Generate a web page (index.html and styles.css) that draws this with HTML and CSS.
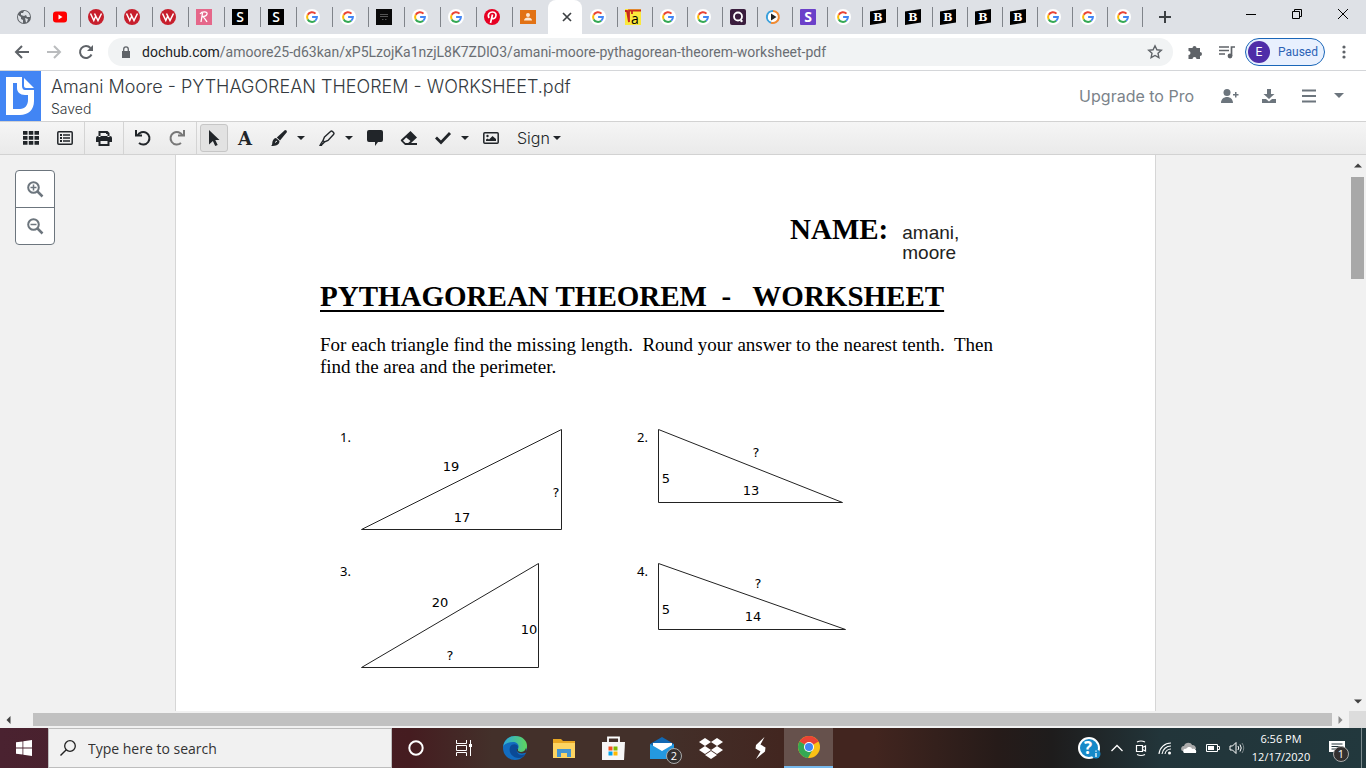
FILE: index.html
```
<!DOCTYPE html>
<html lang="en">
<head>
  <meta charset="utf-8">
  <title>Amani Moore - PYTHAGOREAN THEOREM - WORKSHEET.pdf</title>
  <link rel="stylesheet" href="styles.css">
</head>
<body>
  <!-- Shared icons -->
  <svg class="sprite" aria-hidden="true">
    <symbol id="google" viewBox="0 0 16 16">
      <circle cx="8" cy="8" r="8" fill="#fff"/>
      <g fill="none" stroke-width="2">
        <path d="M11.500 4.600A4.900 4.900 0 0 0 3.700 5.700" stroke="#ea4335"/>
        <path d="M3.700 5.700A4.900 4.900 0 0 0 3.700 10.400" stroke="#fbbc05"/>
        <path d="M3.700 10.400A4.900 4.900 0 0 0 11.200 11.700" stroke="#34a853"/>
        <path d="M11.200 11.700A4.900 4.900 0 0 0 12.900 8H8.100" stroke="#4285f4"/>
      </g>
    </symbol>
    <symbol id="webnovel" viewBox="0 0 16 16">
      <circle cx="8" cy="8" r="8" fill="#c71f2d"/>
      <path d="M2.500 4.500L5.800 11.500 8 6.500M6.500 4.500L10 11.500 13.500 4.500" fill="none" stroke="#fff" stroke-width="1.500"/>
    </symbol>
    <symbol id="squareS" viewBox="0 0 16 16">
      <path d="M0 0h16v16H0z"/>
      <text x="8" y="13" font-size="14" font-weight="600" fill="#fff" text-anchor="middle">S</text>
    </symbol>
    <symbol id="brainly" viewBox="0 0 16 16">
      <path d="M0 2.500L16 0v13.500L0 16z"/>
      <text class="slab" x="8" y="12" font-size="11" font-weight="700" fill="#fff" text-anchor="middle">B</text>
    </symbol>
  </svg>

  <nav class="tabs" aria-label="Browser tabs">
    <button class="tab" title="New page"><svg viewBox="0 0 16 16"><circle cx="8" cy="8" r="7" fill="#5f6368"/><path d="M2 6l3 2v2l2 1v3C4 13.500 2 11 2 8zM8 2l-1 2H5v2l3 1 2-1 1 2h3C14 5 12 2.500 9 2zM9 9l3 1-1 3-1 .500z" fill="#dee1e6"/></svg></button>
    <button class="tab" title="YouTube"><svg viewBox="0 0 16 16"><rect x="1" y="2.500" width="14" height="11" rx="3" fill="#f00"/><path d="M6.500 5.500v5l4-2.500z" fill="#fff"/></svg></button>
    <button class="tab" title="Webnovel"><svg><use href="#webnovel"/></svg></button>
    <button class="tab" title="Webnovel"><svg><use href="#webnovel"/></svg></button>
    <button class="tab" title="Webnovel"><svg><use href="#webnovel"/></svg></button>
    <button class="tab" title="R"><svg viewBox="0 0 16 16"><path d="M0 0h16v16H0z" fill="#e5678a"/><path d="M5 13L6.500 4M4 5c2-3 8-2.500 7 0-.500 2-3 2.500-4.500 2.500 2 1 3 3 4.500 5.500" fill="none" stroke="#fff" stroke-width="1.300"/></svg></button>
    <button class="tab" title="S"><svg><use href="#squareS"/></svg></button>
    <button class="tab" title="S"><svg><use href="#squareS"/></svg></button>
    <button class="tab" title="Google"><svg><use href="#google"/></svg></button>
    <button class="tab" title="Google"><svg><use href="#google"/></svg></button>
    <button class="tab" title="Store"><svg viewBox="0 0 16 16"><path d="M0 0h16v16H0z" fill="#0a0a0a"/><path d="M4 5.500h8M4 7.500h8M6 10.500h1.500M9 10.500h1.500" stroke="#555"/></svg></button>
    <button class="tab" title="Google"><svg><use href="#google"/></svg></button>
    <button class="tab" title="Google"><svg><use href="#google"/></svg></button>
    <button class="tab" title="Pinterest"><svg viewBox="0 0 16 16"><circle cx="8" cy="8" r="8" fill="#e60023"/><path d="M5 9C3 5 6 3 8.500 3c3 0 4.500 2.500 3 5.200-1 1.800-3 1.600-3.500.600M8.500 5.500L6.500 14" fill="none" stroke="#fff" stroke-width="1.700"/></svg></button>
    <button class="tab" title="Classroom"><svg viewBox="0 0 16 16"><path d="M0 1h16v14H0z" fill="#e27214"/><circle cx="8" cy="6" r="2" fill="#fce8d2"/><path d="M4 11.500c0-4 8-4 8 0z" fill="#fce8d2"/></svg></button>
    <button class="tab active" title="Close tab"><svg viewBox="0 0 16 16"><path d="M4 4l8 8M12 4l-8 8" stroke="#3c4043" stroke-width="1.700"/></svg></button>
    <button class="tab narrow first" title="Google"><svg><use href="#google"/></svg></button>
    <button class="tab narrow" title="Algebra"><svg viewBox="0 0 16 16"><path d="M0 0h16v16H0z" fill="#fbe83c"/><path d="M0 2h2l2 11V1.500h12M7 1.500V5" fill="none" stroke="#c8281e" stroke-width="1.800"/><text x="10" y="15" font-size="14" text-anchor="middle">a</text></svg></button>
    <button class="tab narrow" title="Google"><svg><use href="#google"/></svg></button>
    <button class="tab narrow" title="Google"><svg><use href="#google"/></svg></button>
    <button class="tab narrow" title="Quiz"><svg viewBox="0 0 16 16"><rect width="16" height="16" rx="2" fill="#3a1d3d"/><circle cx="8" cy="7.500" r="4" fill="none" stroke="#fff" stroke-width="1.800"/><circle cx="11.500" cy="12" r="1.200" fill="#fff"/></svg></button>
    <button class="tab narrow" title="Video"><svg viewBox="0 0 16 16"><circle cx="8" cy="8" r="5.500" fill="#fff"/><path d="M8 2a6 6 0 0 0-2 11.700" fill="none" stroke="#3aa0dc" stroke-width="2"/><path d="M8 2a6 6 0 1 1-2 11.700" fill="none" stroke="#f08a32" stroke-width="2"/><path d="M6 4.500v7L11.500 8z" fill="#222"/></svg></button>
    <button class="tab narrow" title="S"><svg viewBox="0 0 16 16"><rect width="16" height="16" rx="1" fill="#6b40c9"/><text x="8" y="13" font-size="14" font-weight="700" fill="#fff" text-anchor="middle">S</text></svg></button>
    <button class="tab narrow" title="Google"><svg><use href="#google"/></svg></button>
    <button class="tab narrow" title="Brainly"><svg><use href="#brainly"/></svg></button>
    <button class="tab narrow" title="Brainly"><svg><use href="#brainly"/></svg></button>
    <button class="tab narrow" title="Brainly"><svg><use href="#brainly"/></svg></button>
    <button class="tab narrow" title="Brainly"><svg><use href="#brainly"/></svg></button>
    <button class="tab narrow" title="Brainly"><svg><use href="#brainly"/></svg></button>
    <button class="tab narrow" title="Google"><svg><use href="#google"/></svg></button>
    <button class="tab narrow" title="Google"><svg><use href="#google"/></svg></button>
    <button class="tab narrow" title="Google"><svg><use href="#google"/></svg></button>
    <button class="tab new-tab" title="New tab"><svg viewBox="0 0 16 16"><path d="M8 2v12M2 8h12" stroke="#3c4043" stroke-width="2"/></svg></button>
    <div class="window-controls">
      <button title="Minimize"><svg viewBox="0 0 12 12"><path d="M1 6.500h10" stroke="#000"/></svg></button>
      <button title="Restore"><svg viewBox="0 0 12 12"><path d="M1.500 3.500h7v7h-7zM3.500 3.500v-2h7v7h-2" fill="none" stroke="#000"/></svg></button>
      <button title="Close"><svg viewBox="0 0 12 12"><path d="M1 1l10 10M11 1L1 11" stroke="#000"/></svg></button>
    </div>
  </nav>

  <div class="browser-bar">
    <div class="nav-buttons">
      <button title="Back"><svg viewBox="0 0 16 16"><path d="M15 8H2M8 2L2 8l6 6" fill="none" stroke="#5f6368" stroke-width="2"/></svg></button>
      <button title="Forward"><svg viewBox="0 0 16 16"><path d="M1 8h13M8 2l6 6-6 6" fill="none" stroke="#babcbe" stroke-width="2"/></svg></button>
      <button title="Reload"><svg viewBox="0 0 16 16"><path d="M13.500 10.500A6 6 0 1 1 12.500 4" fill="none" stroke="#5f6368" stroke-width="2"/><path d="M15 1v6H9z" fill="#5f6368"/></svg></button>
    </div>
    <div class="omnibox">
      <svg class="lock" viewBox="0 0 10 12"><path d="M1 5h8v7H1z" fill="#5f6368"/><path d="M2.700 5V3.200a2.300 2.300 0 0 1 4.600 0V5" fill="none" stroke="#5f6368" stroke-width="1.300"/></svg>
      <div class="url"><span>dochub.com</span>/amoore25-d63kan/xP5LzojKa1nzjL8K7ZDlO3/amani-moore-pythagorean-theorem-worksheet-pdf</div>
      <svg class="star" viewBox="0 0 16 16"><path d="M8 1.800l1.900 4 4.400.500-3.300 3 .900 4.400L8 11.500l-3.900 2.200.900-4.400-3.300-3 4.400-.500z" fill="none" stroke="#5f6368" stroke-width="1.400"/></svg>
    </div>
    <button class="ext" title="Extensions"><svg viewBox="0 0 16 16"><path d="M1.500 4h4a2 2 0 1 1 4 0h3.500v4a2 2 0 1 1 0 4v3H9.500a2 2 0 1 0-4 0h-4v-4a2 2 0 1 0 0-4z" fill="#5f6368"/></svg></button>
    <button class="ext" title="Media"><svg viewBox="0 0 16 16"><path d="M0 3h10M0 6.500h10M0 10h6M12.500 12V3H16" fill="none" stroke="#5f6368" stroke-width="1.700"/><circle cx="11" cy="12" r="2.400" fill="#5f6368"/></svg></button>
    <button class="profile"><span class="avatar">E</span>Paused</button>
    <button class="ext" title="Menu"><svg viewBox="0 0 16 16"><g fill="#5f6368"><circle cx="8" cy="3" r="1.600"/><circle cx="8" cy="8" r="1.600"/><circle cx="8" cy="13" r="1.600"/></g></svg></button>
  </div>

  <header class="doc-header">
    <a class="logo" href="#" title="DocHub"><svg viewBox="0 0 41 50"><path d="M6 6h16v9c0 2 1 4 3 4h9v11c0 9-6 14-14 14H6zM13 12v26h7c5 0 8-4 8-9v-5h-3c-5 0-8-3-8-7v-5z" fill="#fff" fill-rule="evenodd"/><path d="M24 7l10 10h-8c-1 0-2-1-2-2z" fill="#fff"/></svg></a>
    <div class="doc-name">
      <h1>Amani Moore - PYTHAGOREAN THEOREM - WORKSHEET.pdf</h1>
      <div class="status">Saved</div>
    </div>
    <div class="doc-actions">
      <a href="#">Upgrade to Pro</a>
      <button title="Share"><svg viewBox="0 0 18 16"><circle cx="7" cy="4.500" r="3.500"/><path d="M1 15c0-8 12-8 12 0zM13 6h2V4h1.500v2h2v1.500h-2v2H15v-2h-2z"/></svg></button>
      <button title="Download"><svg viewBox="0 0 18 16"><path d="M7 1h4v5h3.500L9 11 3.500 6H7zM2 11h4l3 2.500 3-2.500h4v4H2z"/></svg></button>
      <button title="Menu"><svg viewBox="0 0 18 16"><path d="M2 1.500h14v2H2zM2 7h14v2H2zM2 12.500h14v2H2z"/></svg></button>
      <button class="more" title="More"><svg viewBox="0 0 10 6"><path d="M0 0h10L5 5z"/></svg></button>
    </div>
  </header>

  <div class="toolbar">
    <div class="group">
      <button title="Thumbnails"><svg viewBox="0 0 16 14"><path d="M0 0h4.500v3.800H0zM5.800 0h4.500v3.800H5.800zM11.500 0H16v3.800h-4.500zM0 5h4.500v3.800H0zM5.800 5h4.500v3.800H5.800zM11.500 5H16v3.800h-4.500zM0 10h4.500v3.800H0zM5.800 10h4.500v3.800H5.800zM11.500 10H16v3.800h-4.500z"/></svg></button>
      <button title="Outline"><svg viewBox="0 0 16 14"><rect x=".8" y=".8" width="14.400" height="12.400" rx="1" fill="none" stroke="#212529" stroke-width="1.500"/><path d="M3 3h2v2H3zM6 3.300h7v1.400H6zM3 6h2v2H3zM6 6.300h7v1.400H6zM3 9h2v2H3zM6 9.300h7v1.400H6z"/></svg></button>
    </div>
    <div class="group">
      <button title="Print"><svg viewBox="0 0 16 16"><path d="M2.500 7V1h9l2 2v4h-2V4H10V3H4.500v4zM0 8q0-2 2-2h12q2 0 2 2v4h-2.500v4h-11v-4H0zM4.500 11v3h7v-3z" fill-rule="evenodd"/></svg></button>
    </div>
    <div class="group">
      <button title="Undo"><svg viewBox="0 0 16 16"><path d="M2.500 5.500A6.300 6.300 0 1 1 4 13" fill="none" stroke="#212529" stroke-width="2"/><path d="M0 0h2v4.500h5v2H0z"/></svg></button>
      <button title="Redo" class="dim"><svg viewBox="0 0 16 16"><path d="M13.500 5.500A6.300 6.300 0 1 0 12 13" fill="none" stroke="#777" stroke-width="2"/><path d="M16 0h-2v4.500H9v2h7z"/></svg></button>
    </div>
    <div class="group">
      <button class="selected" title="Select"><svg viewBox="0 0 16 16"><path d="M3 0l10.500 10H9.300l2.400 5-2.500 1-2.300-5L3 14.500z"/></svg></button>
      <button title="Text" class="letter">A</button>
      <button title="Draw"><svg viewBox="0 0 16 16"><path d="M14 0q2 0 2 2L9 10.500 5.800 7.500zM5 8l3.500 3c0 4-3.500 5-8.500 5 1.500-1 1-2 1.500-4.500.500-2 2-3.300 3.500-3.500z"/><path d="M4 12.500l2-1.500" stroke="#f0f0f0"/></svg></button>
      <button class="caret" title="Draw options"></button>
      <button title="Highlight"><svg viewBox="0 0 16 16"><path d="M5.500 7L11.500 1.500q1-1 2 0l1 1q1 1 0 2L9 10.500 5.500 12 4 10.500zM4 10.500L2.500 13l1 1 2-2" fill="none" stroke="#212529" stroke-width="1.400"/><path d="M1.500 13l2 1.500L3 16H0z"/></svg></button>
      <button class="caret" title="Highlight options"></button>
      <button title="Comment"><svg viewBox="0 0 16 16"><path d="M2 0h12q2 0 2 2v8q0 2-2 2h-3l-3 4v-4H2q-2 0-2-2V2q0-2 2-2z"/></svg></button>
      <button title="Erase"><svg viewBox="0 0 16 16"><path d="M9.500 1L16 7.500 10 13h6v2H4L0 11q-.400-.700 0-1.200zM5.200 7.500L2 10.700 4.500 13h2.700l2.300-2z" fill-rule="evenodd"/></svg></button>
      <button title="Check"><svg viewBox="0 0 16 16"><path d="M1 7.500L6 12.500 15 3" fill="none" stroke="#212529" stroke-width="2.800"/></svg></button>
      <button class="caret" title="Check options"></button>
      <button title="Image"><svg viewBox="0 0 16 16"><rect x=".8" y="2.800" width="14.400" height="10.400" rx="1" fill="none" stroke="#212529" stroke-width="1.500"/><circle cx="4.500" cy="6" r="1.200"/><path d="M3 11V9.500l1.500-1L6 9.500 9.500 6 13 9v2z"/></svg></button>
      <button class="sign">Sign</button>
    </div>
  </div>

  <main class="workspace">
    <div class="canvas">
      <div class="zoom">
        <button title="Zoom in"><svg viewBox="0 0 16 16"><circle cx="6.500" cy="6.500" r="5.300" fill="none" stroke="#6c757d" stroke-width="2"/><path d="M10.500 10.500l5 5" stroke="#6c757d" stroke-width="2.500"/><path d="M3.500 6.500h6M6.500 3.500v6" stroke="#6c757d" stroke-width="1.500"/></svg></button>
        <button title="Zoom out"><svg viewBox="0 0 16 16"><circle cx="6.500" cy="6.500" r="5.300" fill="none" stroke="#6c757d" stroke-width="2"/><path d="M10.500 10.500l5 5" stroke="#6c757d" stroke-width="2.500"/><path d="M3.500 6.500h6" stroke="#6c757d" stroke-width="1.500"/></svg></button>
      </div>

      <article class="paper">
        <div class="name-row">
          <strong>NAME:</strong>
          <span class="answer">amani,<br>moore</span>
        </div>
        <h2>PYTHAGOREAN THEOREM&nbsp; -&nbsp;&nbsp; WORKSHEET</h2>
        <p>For each triangle find the missing length.&nbsp; Round your answer to the nearest tenth.&nbsp; Then find the area and the perimeter.</p>

        <div class="problems">
          <div class="problem">
            <span>1.</span>
            <svg width="206" height="106"><path d="M0.500 101.500L200.500 1.500V101.500z"/><text x="90" y="43" text-anchor="middle">19</text><text x="101" y="94" text-anchor="middle">17</text><text x="195" y="69" text-anchor="middle">?</text></svg>
          </div>
          <div class="problem">
            <span>2.</span>
            <svg width="206" height="106"><path d="M0.500 1.500L184.500 74.500H0.500z"/><text x="98" y="29" text-anchor="middle">?</text><text x="8" y="55" text-anchor="middle">5</text><text x="93" y="67" text-anchor="middle">13</text></svg>
          </div>
          <div class="problem">
            <span>3.</span>
            <svg width="206" height="106"><path d="M0.500 105.500L177.500 1.500V105.500z"/><text x="79" y="45" text-anchor="middle">20</text><text x="168" y="72" text-anchor="middle">10</text><text x="89" y="98" text-anchor="middle">?</text></svg>
          </div>
          <div class="problem">
            <span>4.</span>
            <svg width="206" height="106"><path d="M0.500 1.500L187.500 67.500H0.500z"/><text x="100" y="26" text-anchor="middle">?</text><text x="8" y="52" text-anchor="middle">5</text><text x="95" y="59" text-anchor="middle">14</text></svg>
          </div>
        </div>
      </article>
    </div>
    <div class="scroll-y">
      <svg viewBox="0 0 8 5"><path d="M0 4.500L4 .500l4 4z" fill="#404040"/></svg>
      <div class="thumb"></div>
      <svg viewBox="0 0 8 5"><path d="M0 .500h8l-4 4z" fill="#404040"/></svg>
    </div>
    <div class="scroll-x">
      <svg viewBox="0 0 5 8"><path d="M4.500 0v8L.500 4z" fill="#404040"/></svg>
      <div class="thumb"></div>
      <svg viewBox="0 0 5 8"><path d="M.500 0v8l4-4z" fill="#8a8a8a"/></svg>
    </div>
    <div class="corner"></div>
  </main>

  <footer class="taskbar">
    <button class="start" title="Start"><svg viewBox="0 0 16 16"><path d="M0 2.300l6.500-.900v6.200H0zM7.300 1.300L16 0v7.600H7.300zM0 8.400h6.500v6.200L0 13.700zM7.300 8.400H16V16l-8.700-1.300z" fill="#fff"/></svg></button>
    <label class="search">
      <svg viewBox="0 0 16 16"><circle cx="10" cy="6" r="5.300" fill="none" stroke="#222" stroke-width="1.300"/><path d="M6.300 9.700L.500 15.500" stroke="#222" stroke-width="1.400"/></svg>
      <input type="text" placeholder="Type here to search" aria-label="Type here to search">
    </label>
    <button title="Cortana"><svg viewBox="0 0 24 24"><circle cx="12" cy="12" r="6.700" fill="none" stroke="#fff" stroke-width="2"/></svg></button>
    <button title="Task View"><svg viewBox="0 0 24 24"><path d="M4.500 4v3.500h10V4M4.500 20v-3.500h10V20M4.500 9.500h10v5h-10zM18.500 4v16" fill="none" stroke="#fff"/><path d="M17 8h3v3h-3z" fill="#fff"/></svg></button>
    <div class="pinned">
      <button title="Edge"><svg viewBox="0 0 24 24"><defs><linearGradient id="edge-top"><stop offset="0" stop-color="#2aa7df"/><stop offset="1" stop-color="#5fd65c"/></linearGradient></defs><circle cx="12" cy="12" r="12" fill="#126cc0"/><path d="M0 11C1 4 6 0 12 0c8 0 12 5 12 10 0 4-3 6-6 6-2 0-4-1-3-3 2-4-1-7-5-7-5 0-9 2-10 5z" fill="url(#edge-top)"/><path d="M7 11c-2 6 3 11 9 11 3 0 5-2 6-4-3 2-8 1-8-3 0-2 1-2 1-4 0-3-6-4-8 0z" fill="#0b4a96"/><path d="M14 13c-1 4 5 6 10 3l-1-4c-1 3-3 4-5 4-2 0-4-1-3-3z" fill="#43302a"/></svg></button>
      <button title="File Explorer"><svg viewBox="0 0 24 24"><path d="M1 3h8l2 2h12v17H1z" fill="#e8a723"/><path d="M1 7h22v15H1z" fill="#fcd462"/><path d="M5 21v-8h14v8h-4v-4H9v4z" fill="#4394d0"/></svg></button>
      <button title="Store"><svg viewBox="0 0 24 24"><path d="M7 7V1.500h11V7" fill="none" stroke="#fff" stroke-width="1.800"/><path d="M1 6h23l-1 18H1z" fill="#f6f6f6"/><path d="M7.500 10.500h4v4h-4z" fill="#f25022"/><path d="M12.500 10.500h4v4h-4z" fill="#7fba00"/><path d="M7.500 15.500h4v4h-4z" fill="#00a4ef"/><path d="M12.500 15.500h4v4h-4z" fill="#ffb900"/></svg></button>
      <button title="Mail"><svg viewBox="0 0 24 24"><path d="M0 8l12-7 12 7v14H0z" fill="#1168b3"/><path d="M3 7h19v10H3z" fill="#fff"/><path d="M0 8l12 7 12-7v15H0z" fill="#2499e0"/></svg><span class="badge">2</span></button>
      <button title="Dropbox"><svg viewBox="0 0 24 24"><path d="M6 2l6 4-6 4-6-4zM18 2l6 4-6 4-6-4zM6 10l6 4-6 4-6-4zM18 10l6 4-6 4-6-4zM12 15l6 4-6 4-6-4z" fill="#fff"/></svg></button>
      <button title="S"><svg viewBox="0 0 24 24"><path d="M16.500 1L8 9l-.500 3.500 5 3L8 23l9-7.500.500-4-5-3z" fill="#fff"/></svg></button>
      <button class="running" title="Chrome"><svg viewBox="0 0 24 24"><circle cx="12" cy="12" r="11" fill="#fbc116"/><path d="M12 12L2.500 6.500a11 11 0 0 1 19 0z" fill="#ea4335"/><path d="M12 12L2.500 6.500A11 11 0 0 0 11 23l5-9z" fill="#34a853"/><path d="M12 7h10l-.500-.600H12z" fill="#ea4335"/><circle cx="12" cy="12" r="5" fill="#fff"/><circle cx="12" cy="12" r="4" fill="#4285f4"/></svg></button>
    </div>

    <div class="tray">
      <button class="help" title="Help"><svg viewBox="0 0 24 24"><circle cx="12" cy="12" r="10" fill="#1689c8" stroke="#fff" stroke-width="2"/><text x="11" y="18" font-size="17" font-weight="700" fill="#fff" text-anchor="middle">?</text><circle cx="19" cy="18" r="4.500" fill="#1689c8"/><path d="M19 17v4M19 14.500v1.300" stroke="#fff" stroke-width="1.300"/></svg></button>
      <button title="Show hidden icons"><svg viewBox="0 0 16 16"><path d="M2.500 11L8 5.500l5.500 5.500" fill="none" stroke="#fff" stroke-width="1.300"/></svg></button>
      <button title="Meet Now"><svg viewBox="0 0 16 16"><path d="M3.500 5.500h6v6h-6zM9.500 7.500l3-1.500v5l-3-1.500M4 2q4-2 8 0M4 14.500q4 2 8 0" fill="none" stroke="#fff" stroke-width="1.200"/></svg></button>
      <button title="Network"><svg viewBox="0 0 16 16"><g fill="none" stroke="#fff" stroke-width="1.100"><path d="M2 14A12 12 0 0 1 14 3"/><path d="M5 14a9 9 0 0 1 9-8"/><path d="M8 14a6 6 0 0 1 6-5"/></g><circle cx="12.500" cy="13" r="1.500" fill="#fff"/></svg></button>
      <button title="OneDrive"><svg viewBox="0 0 16 16"><path d="M1 11C-1 8 1 6 3 6c1-4 7-4 8-1 3 0 4 2 4 4z" fill="#aaa"/><path d="M3 13c-2-2 0-5 2-4 2-3 6-2 6 0 3-1 5 1 4 4z" fill="#fff"/></svg></button>
      <button title="Battery"><svg viewBox="0 0 16 16"><path d="M1.500 4.500h11v7h-11zM12.500 6.500h2v3h-2" fill="none" stroke="#fff"/><path d="M3 6h6v4H3z" fill="#fff"/></svg></button>
      <button title="Volume"><svg viewBox="0 0 16 16"><path d="M1 6h2.500l3.500-3.500v11L3.500 10H1zM9 6q1.500 2 0 4M11 4.500q2.500 3.500 0 7" fill="none" stroke="#fff"/><path d="M13 3q3.500 5 0 10" fill="none" stroke="#7d888b"/></svg></button>
      <div class="clock">6:56 PM<br>12/17/2020</div>
      <button class="notes" title="Notifications"><svg viewBox="0 0 16 16"><path d="M0 1h16v11H8l-3 3v-3H0z" fill="#fff"/><path d="M2.500 4h11M2.500 6.500h11M2.500 9h7" stroke="#22353a"/></svg><span class="badge">1</span></button>
      <div class="desktop"></div>
    </div>
  </footer>
</body>
</html>
```
FILE: styles.css
```
* {
  box-sizing: border-box;
}
body {
  margin: 0;
  height: 100vh;
  display: flex;
  flex-direction: column;
  overflow: hidden;
  font-family: "Open Sans", "Noto Sans", sans-serif;
  color: #212529;
  background-color: #fff;
}
button {
  border: 0;
  padding: 0;
  background: none;
  font-family: inherit;
  color: inherit;
  display: flex;
  align-items: center;
  justify-content: center;
  flex-shrink: 0;
}
button svg {
  width: 16px;
  height: 16px;
}
svg,
symbol {
  flex-shrink: 0;
  overflow: visible;
}
.sprite {
  display: none;
}
.slab {
  font-family: "DejaVu Serif", serif;
}

/* Tab strip */
.tabs {
  display: flex;
  align-items: flex-start;
  height: 34px;
  padding-left: 8px;
  background-color: #dee1e6;
  flex-shrink: 0;
}
.tab {
  width: 36px;
  height: 34px;
  padding-left: 8px;
  justify-content: flex-start;
  background: linear-gradient(#80848a, #80848a) left center / 1px 20px no-repeat;
}
.tab:first-child,
.tab.first {
  background: none;
}
.tab.narrow {
  width: 35px;
}
.tab.active {
  width: 34px;
  padding-left: 11px;
  background: #fff;
  border-radius: 8px 8px 0 0;
}
.tab.new-tab {
  padding-left: 15px;
}
.window-controls {
  display: flex;
  margin-left: auto;
}
.window-controls button {
  width: 46px;
  height: 28px;
}
.window-controls svg {
  width: 12px;
  height: 12px;
}

/* Address bar */
.browser-bar {
  display: flex;
  align-items: center;
  height: 37px;
  padding: 0 6px;
  border-bottom: 1px solid #d4d6d9;
  font-family: Roboto, sans-serif;
  flex-shrink: 0;
}
.nav-buttons {
  display: flex;
  margin-right: 6px;
}
.nav-buttons button,
.ext {
  width: 32px;
  height: 28px;
}
.omnibox {
  display: flex;
  align-items: center;
  flex: 1;
  min-width: 0;
  height: 28px;
  padding: 0 10px 0 13px;
  margin-right: 6px;
  border-radius: 14px;
  background-color: #f1f3f4;
}
.lock {
  width: 10px;
  height: 12px;
  margin-right: 11px;
}
.star {
  width: 16px;
  height: 16px;
}
.url {
  flex: 1;
  min-width: 0;
  overflow: hidden;
  white-space: nowrap;
  font-size: 14px;
  line-height: 20px;
  color: #6a6e73;
}
.url span {
  color: #202124;
}
.profile {
  width: 80px;
  height: 28px;
  margin: 0 3px 0 2px;
  padding-left: 2px;
  gap: 8px;
  justify-content: flex-start;
  border: 1px solid #1a66b8;
  border-radius: 14px;
  background-color: #e8f0fe;
  font-size: 12px;
  color: #2b62b5;
}
.avatar {
  width: 22px;
  height: 22px;
  line-height: 22px;
  border-radius: 11px;
  background-color: #4f2da8;
  color: #fff;
}

/* Document header */
.doc-header {
  display: flex;
  height: 50px;
  font-family: Inter, sans-serif;
  color: #343a40;
  flex-shrink: 0;
}
.logo {
  width: 41px;
  height: 50px;
  background-color: #4285f4;
}
.logo svg {
  width: 41px;
  height: 50px;
}
.doc-name {
  padding: 4px 0 0 10px;
}
.doc-name h1 {
  margin: 0;
  font-size: 18px;
  line-height: 24px;
  font-weight: 300;
  white-space: nowrap;
}
.status {
  font-size: 14px;
  line-height: 20px;
  font-weight: 300;
}
.doc-actions {
  display: flex;
  align-items: center;
  margin-left: auto;
  padding-right: 17px;
}
.doc-actions a {
  margin-right: 15px;
  font-size: 16px;
  font-weight: 400;
  color: #7b838a;
  text-decoration: none;
}
.doc-actions button {
  width: 40px;
  height: 32px;
  fill: #6c757d;
}
.doc-actions button svg {
  width: 18px;
}
.doc-actions .more {
  width: 20px;
}
.doc-actions .more svg {
  width: 10px;
  height: 6px;
}

/* Editing tools */
.toolbar {
  display: flex;
  height: 34px;
  border-top: 1px solid #d2d2d2;
  border-bottom: 1px solid #d2d2d2;
  background: linear-gradient(#f5f5f5, #eaeaea);
  font-family: Inter, sans-serif;
  flex-shrink: 0;
}
.group {
  display: flex;
  align-items: center;
  padding: 0 2px;
  border-right: 1px solid #d4d4d4;
}
.group:first-child {
  padding-left: 14px;
}
.group:last-child {
  border: 0;
  padding-left: 3px;
}
.toolbar button {
  width: 34px;
  height: 28px;
  fill: #212529;
}
.toolbar .dim {
  fill: #777;
}
.toolbar .selected {
  width: 28px;
  border: 1px solid #c6c6c6;
  border-radius: 3px;
  background-color: #e2e2e2;
}
.toolbar .letter {
  font-family: "DejaVu Serif", serif;
  font-weight: bold;
  font-size: 18px;
}
.toolbar .caret {
  width: 10px;
  margin-right: 4px;
}
.caret::after,
.sign::after {
  content: "";
  border: 4px solid transparent;
  border-top-color: #212529;
  border-bottom: 0;
}
.toolbar .sign {
  width: auto;
  margin-left: 9px;
  gap: 3px;
  font-size: 16px;
  font-weight: 300;
}

/* Page area */
.workspace {
  display: grid;
  grid-template: minmax(0, 1fr) 17px / minmax(0, 1fr) 17px;
  flex: 1;
  min-height: 0;
  background-color: #f1f1f1;
}
.canvas {
  position: relative;
  display: flex;
  justify-content: center;
  padding-right: 18px;
  overflow: hidden;
}
.zoom {
  position: absolute;
  top: 15px;
  left: 15px;
  width: 40px;
  border: 1px solid #6c757d;
  border-radius: 4px;
  background-color: #fff;
}
.zoom button {
  width: 38px;
  height: 36px;
}
.zoom button + button {
  height: 37px;
  border-top: 1px solid #6c757d;
}
.paper {
  width: 981px;
  padding: 58px 144px 0;
  border: solid #d6d6d6;
  border-width: 0 1px;
  background-color: #fff;
  color: #000;
  font-family: "Liberation Serif", serif;
}
.name-row {
  display: flex;
  gap: 14px;
  padding-left: 470px;
}
.name-row strong {
  font-size: 29px;
  line-height: 32px;
}
.answer {
  padding-top: 10px;
  font-family: "Liberation Sans", sans-serif;
  font-size: 19px;
  line-height: 20px;
  color: #222;
}
.paper h2 {
  margin: 17px 0 0;
  font-size: 29px;
  line-height: 32px;
  text-decoration: underline;
  text-decoration-thickness: 2px;
  text-decoration-skip-ink: none;
  text-underline-offset: 4px;
  white-space: nowrap;
}
.paper p {
  margin: 22px 0 0;
  font-size: 19px;
  line-height: 22px;
}
.problems {
  display: grid;
  grid-template-columns: 297px 1fr;
  row-gap: 28px;
  margin: 50px 0 0 20px;
}
.problem {
  display: flex;
  font-family: "Noto Sans", sans-serif;
  font-size: 13px;
  line-height: 18px;
}
.problem span {
  width: 21px;
}
.problem path {
  fill: none;
  stroke: #222;
}
.problem text {
  font-family: "DejaVu Sans", sans-serif;
}

/* Scrollbars */
.scroll-y,
.scroll-x {
  display: flex;
  align-items: center;
}
.scroll-y {
  flex-direction: column;
  padding: 8px 0 7px;
}
.scroll-x {
  grid-row: 2;
  padding: 0 6px;
}
.scroll-y svg {
  width: 8px;
  height: 5px;
}
.scroll-x svg {
  width: 5px;
  height: 8px;
}
.scroll-y .thumb {
  width: 13px;
  height: 102px;
  margin: 9px 0 auto;
  background-color: #a8a8a8;
}
.scroll-x .thumb {
  flex: 1;
  height: 13px;
  margin: 0 6px 0 22px;
  background-color: #c1c1c1;
}
.corner {
  background-color: #dcdcdc;
}

/* Windows taskbar */
.taskbar {
  display: flex;
  height: 40px;
  background: linear-gradient(to right, #4a2230 0, #451c20 30%, #43302a 36%, #43302a 48%, #42251f 58%, #42251f 64%, #261b19 73%, #1e1c1c 77%, #22353a 85%, #22383d 100%);
  color: #fff;
  flex-shrink: 0;
}
.taskbar button {
  position: relative;
  width: 48px;
  height: 40px;
}
.taskbar svg {
  width: 24px;
  height: 24px;
}
.taskbar .start svg {
  width: 16px;
  height: 16px;
}
.search {
  display: flex;
  align-items: center;
  width: 344px;
  padding: 0 11px;
  gap: 12px;
  border: 1px solid #bdbdbd;
  background-color: #f1f1f1;
}
.taskbar .search svg {
  width: 16px;
  height: 16px;
}
.search input {
  flex: 1;
  min-width: 0;
  padding: 0;
  border: 0;
  background: none;
  font-family: inherit;
  font-size: 14px;
}
.search input::placeholder {
  color: #333;
  opacity: 1;
}
.pinned {
  display: flex;
  margin-left: 2px;
}
.taskbar .pinned button {
  width: 49px;
}
.taskbar .running {
  background-color: #66514c;
  border-bottom: 2px solid #76b9ed;
}
.badge {
  position: absolute;
  right: 4px;
  bottom: 4px;
  width: 16px;
  height: 16px;
  border: 1px solid #aaa;
  border-radius: 8px;
  background-color: #33302f;
  font-size: 11px;
  line-height: 14px;
  text-align: center;
}
.notes .badge {
  right: 12px;
  bottom: 6px;
}
.tray {
  display: flex;
  margin-left: auto;
}
.taskbar .tray button {
  width: 24px;
}
.tray svg {
  width: 16px;
  height: 16px;
}
.taskbar .tray .help {
  width: 32px;
}
.tray .help svg {
  width: 24px;
  height: 24px;
}
.clock {
  width: 64px;
  padding-top: 2px;
  font-size: 11px;
  line-height: 18px;
  text-align: center;
}
.taskbar .tray .notes {
  width: 48px;
}
.desktop {
  width: 5px;
  border-left: 1px solid #7c8a8d;
}
```
